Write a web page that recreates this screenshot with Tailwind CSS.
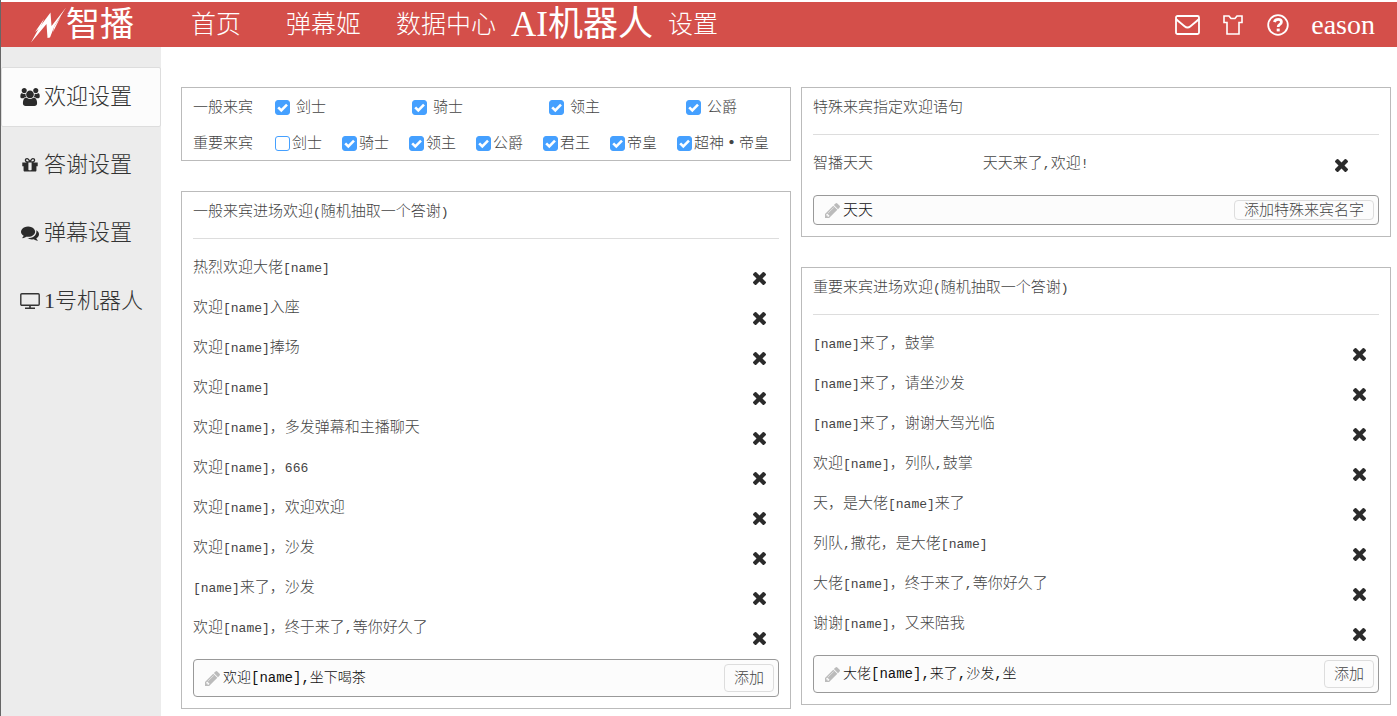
<!DOCTYPE html>
<html lang="zh-CN">
<head>
    <meta charset="UTF-8" />
    <meta name="viewport" content="width=device-width, initial-scale=1.0" />
    <title>智播 - AI机器人</title>
    <script src="https://cdn.jsdelivr.net/npm/@tailwindcss/browser@4"></script>
    <style>
        body { font-family: 'Liberation Serif', 'Noto Sans CJK SC', serif; }
        .latin { font-family: 'Liberation Mono', 'Noto Sans CJK SC', monospace; }
    </style>
</head>
<body class="min-h-screen flex flex-col bg-white border-l border-[#666] pt-[2px] text-[15px] leading-5 font-light text-[#444]">

<!-- Icon sprite -->
<svg class="hidden">
    <symbol id="i-times" viewBox="302 366 1188 1188"><path d="M1490 1322q0 40-28 68l-136 136q-28 28-68 28t-68-28l-294-294-294 294q-28 28-68 28t-68-28l-136-136q-28-28-28-68t28-68l294-294-294-294q-28-28-28-68t28-68l136-136q28-28 68-28t68 28l294 294 294-294q28-28 68-28t68 28l136 136q28 28 28 68t-28 68l-294 294 294 294q28 28 28 68z"/></symbol>
    <symbol id="i-pencil" viewBox="128 149 1515 1515"><path d="M491 1536l91-91-235-235-91 91v107h128v128h107zm523-928q0-22-22-22-10 0-17 7l-542 542q-7 7-7 17 0 22 22 22 10 0 17-7l542-542q7-7 7-17zm-54-192l416 416-832 832h-416v-416zm683 96q0 53-37 90l-166 166-416-416 166-165q36-38 90-38 53 0 91 38l235 234q37 39 37 91z"/></symbol>
    <symbol id="i-check" viewBox="0 0 15 15"><path d="M3.200 7.300l3.100 3.100 5.700-5.700" fill="none" stroke="currentColor" stroke-width="2.600"/></symbol>
</svg>

<!-- Header -->
<header class="h-[45px] shrink-0 bg-[#d44f4a] text-white flex items-center justify-between pl-[30px] pr-[22px]">
    <div class="flex items-center">
        <a href="#" class="flex items-center text-[34px] leading-[45px] font-normal">
            <svg class="w-[35px] h-[36px]" viewBox="0 0 35 36" fill="currentColor">
                <path d="M0 35.500L8 21 19.500 5.500 20.500 19 35 .5 23.500 19 19 30.500 16.500 31 15.500 17z"/>
                <path d="M4 25L13 12 9 21zM23 20L30 9 22 25z"/>
            </svg>
            智播
        </a>
        <nav class="flex items-center text-[25px] leading-[45px]">
            <a href="#" class="ml-[57px]">首页</a>
            <a href="#" class="ml-[45px]">弹幕姬</a>
            <a href="#" class="ml-[35px]">数据中心</a>
            <a href="#" class="ml-[15px] text-[35px] font-normal">AI机器人</a>
            <a href="#" class="ml-[15px]">设置</a>
        </nav>
    </div>
    <div class="flex items-center text-[28px] leading-[45px] font-normal">
        <button aria-label="消息">
            <svg class="w-[25px] h-[20px]" viewBox="0 0 25 20" fill="none" stroke="currentColor" stroke-width="1.800"><rect x="1" y="1" width="23" height="18" rx="1.500"/><path d="M1 4c3 3 6 5 8.500 7.200q3 2.600 6 0C18 9 21 7 24 4"/></svg>
        </button>
        <button aria-label="皮肤" class="ml-[23px]">
            <svg class="w-[20px] h-[20px]" viewBox="0 0 20 20" fill="none" stroke="currentColor" stroke-width="1.600"><path d="M1 1h5l2 2.500h4L14 1h5v6.500h-3V19H4V7.500H1z"/></svg>
        </button>
        <button aria-label="帮助" class="ml-[24px]">
            <svg class="w-[22px] h-[22px]" viewBox="0 0 22 22" fill="none" stroke="currentColor"><circle cx="11" cy="11" r="9.800" stroke-width="1.800"/><path d="M7.300 8q1-2.600 3.900-2.600 3.200 0 3.200 2.600 0 1.500-1.800 2.600-1.400.9-1.400 2.400" stroke-width="2.800"/><path d="M9.700 14.600h3v2.800h-3z" fill="currentColor" stroke="none"/></svg>
        </button>
        <a href="#" class="ml-[22px]">eason</a>
    </div>
</header>

<div class="flex-grow flex">
    <!-- Sidebar -->
    <aside class="w-40 shrink-0 bg-[#ececec] pt-5">
        <nav class="flex flex-col gap-2 text-[22px] text-[#333]">
            <a href="#" class="h-[60px] flex items-center gap-1 pl-[18px] rounded-[2px] border border-[#ddd] bg-[#fcfcfc]">
                <svg class="w-5 h-[18px]" viewBox="64 0 1920 1792" fill="#2b2b2b"><path d="M657 896q-162 5-265 128h-134q-82 0-138-40.500t-56-118.500q0-353 124-353 6 0 43.500 21t97.500 42.500 119 21.500q67 0 133-23-5 37-5 66 0 159 93 256zm1071 637q0 120-73 189.500t-194 69.500h-874q-121 0-194-69.500t-73-189.500q0-53 3.500-103.500t14-109 26.500-108.500 43-97.500 62-81 85.500-53.500 111.500-20q10 0 43 21.500t73 48 107 48 135 21.500 135-21.500 107-48 73-48 43-21.500q61 0 111.500 20t85.500 53.500 62 81 43 97.500 26.500 108.500 14 109 3.500 103.500zm-1024-1277q0 106-75 181t-181 75-181-75-75-181 75-181 181-75 181 75 75 181zm704 384q0 159-112.500 271.500t-271.500 112.500-271.500-112.500-112.500-271.500 112.500-271.500 271.500-112.500 271.500 112.500 112.500 271.500zm576 225q0 78-56 118.500t-138 40.500h-134q-103-123-265-128 93-97 93-256 0-29-5-66 66 23 133 23 59 0 119-21.500t97.500-42.500 43.500-21q124 0 124 353zm-128-609q0 106-75 181t-181 75-181-75-75-181 75-181 181-75 181 75 75 181z"/></svg>
                欢迎设置
            </a>
            <a href="#" class="h-[60px] flex items-center gap-1 pl-[19px]">
                <svg class="w-5 h-[18px]" viewBox="0 0 1792 1792" fill="#2b2b2b"><path d="M1056 1356v-716h-320v716q0 25 18 38.500t46 13.500h192q28 0 46-13.500t18-38.500zm-456-844h195l-126-161q-26-31-69-31-40 0-68 28t-28 68 28 68 68 28zm688-96q0-40-28-68t-68-28q-43 0-69 31l-125 161h194q40 0 68-28t28-68zm376 256v320q0 14-9 23t-23 9h-96v416q0 40-28 68t-68 28h-1088q-40 0-68-28t-28-68v-416h-96q-14 0-23-9t-9-23v-320q0-14 9-23t23-9h440q-93 0-158.500-65.500t-65.500-158.500 65.500-158.500 158.500-65.500q107 0 168 77l128 165 128-165q61-77 168-77 93 0 158.500 65.500t65.500 158.500-65.500 158.500-158.500 65.500h440q14 0 23 9t9 23z"/></svg>
                答谢设置
            </a>
            <a href="#" class="h-[60px] flex items-center gap-1 pl-[19px]">
                <svg class="w-5 h-[18px]" viewBox="0 0 1792 1792" fill="#2b2b2b"><path d="M1408 768q0 139-94 257t-256.500 186.500-353.500 68.500q-86 0-176-16-124 88-278 128-36 9-86 16h-3q-11 0-20.500-8t-11.500-21q-1-3-1-6.500t.5-6.500 2-6l2.500-5 3.500-5.500 4-5 4.500-5 4-4.500q5-6 23-25t26-29.500 22.500-29 25-38.500 20.500-44q-124-72-195-177t-71-224q0-139 94-257t256.500-186.500 353.500-68.500 353.500 68.500 256.500 186.500 94 257zm384 256q0 120-71 224.500t-195 176.500q10 24 20.500 44t25 38.500 22.500 29 26 29.500 23 25q1 1 4 4.500t4.500 5 4 5 3.500 5.500l2.500 5 2 6 .5 6.500-1 6.500q-3 14-13 22t-22 7q-50-7-86-16-154-40-278-128-90 16-176 16-271 0-472-132 58 4 88 4 161 0 309-45t264-129q125-92 192-212t67-254q0-77-23-152 129 71 204 178t75 230z"/></svg>
                弹幕设置
            </a>
            <a href="#" class="h-[60px] flex items-center gap-1 pl-[19px]">
                <svg class="w-5 h-[18px]" viewBox="0 0 20 18" fill="none" stroke="#333"><rect x=".8" y="1.700" width="18.400" height="11.600" rx="1" stroke-width="1.400"/><path d="M10 13v3M5 16.200h10" stroke-width="1.600"/></svg>
                1号机器人
            </a>
        </nav>
    </aside>

    <!-- Settings panels -->
    <main class="flex-grow grid grid-cols-[610fr_590fr] gap-[10px] items-start pt-10 pl-5 pr-[6px] pb-[7px]">
        <div class="flex flex-col gap-[30px]">
            <section class="border border-[#bbb] pt-[9px] pb-[7px] px-[11px] flex flex-col gap-4">
                <div class="flex">
                    <span class="w-[82px] shrink-0">一般来宾</span>
                    <div id="normal-guests" class="flex"></div>
                </div>
                <div class="flex">
                    <span class="w-[82px] shrink-0">重要来宾</span>
                    <div id="vip-guests" class="flex"></div>
                </div>
            </section>

            <section class="border border-[#bbb] px-[11px] pb-[11px]">
                <h2 class="pt-[9px] pb-[17px] border-b border-[#ddd]">一般来宾进场欢迎<span class="latin text-[13px] leading-none">(</span>随机抽取一个答谢<span class="latin text-[13px] leading-none">)</span></h2>
                <ul id="normal-list" class="mt-[18px]"></ul>
                <form class="mt-[2px] h-[38px] flex items-center rounded-[4px] border border-[#999] bg-[#fcfcfc] pl-[11px] pr-1">
                    <svg class="size-[15px] shrink-0 mr-[3px]" fill="#bbb"><use href="#i-pencil"/></svg>
                    <input type="text" aria-label="一般来宾欢迎语" value="欢迎[name],坐下喝茶" class="latin flex-grow min-w-0 text-[14px] text-[#111] outline-none" />
                    <button type="button" class="h-7 px-[9px] rounded-[4px] border border-[#ddd]">添加</button>
                </form>
            </section>
        </div>

        <div class="flex flex-col gap-[30px]">
            <section class="border border-[#bbb] px-[11px] pb-[11px]">
                <h2 class="pt-[9px] pb-[17px] border-b border-[#ddd]">特殊来宾指定欢迎语句</h2>
                <div class="mt-[18px] h-10 flex items-start">
                    <span class="w-[30%]">智播天天</span>
                    <span class="flex-grow">天天来了<span class="latin text-[13px] leading-none">,</span>欢迎<span class="latin text-[13px] leading-none">!</span></span>
                    <button aria-label="删除" class="mt-[6px] mr-[31px]"><svg class="size-[13px]" fill="#2b2b2b"><use href="#i-times"/></svg></button>
                </div>
                <form class="mt-[2px] h-[30px] flex items-center rounded-[4px] border border-[#999] bg-[#fcfcfc] pl-[11px] pr-1">
                    <svg class="size-[15px] shrink-0 mr-[3px]" fill="#bbb"><use href="#i-pencil"/></svg>
                    <input type="text" aria-label="特殊来宾名字" value="天天" class="flex-grow min-w-0 text-[#111] outline-none" />
                    <button type="button" class="h-5 leading-[18px] px-[9px] rounded-[4px] border border-[#ddd]">添加特殊来宾名字</button>
                </form>
            </section>

            <section class="border border-[#bbb] px-[11px] pb-[11px]">
                <h2 class="pt-[9px] pb-[17px] border-b border-[#ddd]">重要来宾进场欢迎<span class="latin text-[13px] leading-none">(</span>随机抽取一个答谢<span class="latin text-[13px] leading-none">)</span></h2>
                <ul id="vip-list" class="mt-[18px]"></ul>
                <form class="mt-[2px] h-[38px] flex items-center rounded-[4px] border border-[#999] bg-[#fcfcfc] pl-[11px] pr-1">
                    <svg class="size-[15px] shrink-0 mr-[3px]" fill="#bbb"><use href="#i-pencil"/></svg>
                    <input type="text" aria-label="重要来宾欢迎语" value="大佬[name],来了,沙发,坐" class="latin flex-grow min-w-0 text-[14px] text-[#111] outline-none" />
                    <button type="button" class="h-7 px-[9px] rounded-[4px] border border-[#ddd]">添加</button>
                </form>
            </section>
        </div>
    </main>
</div>

<!-- Script -->
<script>
    const normalList = ["热烈欢迎大佬[name]", "欢迎[name]入座", "欢迎[name]捧场", "欢迎[name]", "欢迎[name]，多发弹幕和主播聊天", "欢迎[name]，666", "欢迎[name]，欢迎欢迎", "欢迎[name]，沙发", "[name]来了，沙发", "欢迎[name]，终于来了,等你好久了"];
    const vipList = ["[name]来了，鼓掌", "[name]来了，请坐沙发", "[name]来了，谢谢大驾光临", "欢迎[name]，列队,鼓掌", "天，是大佬[name]来了", "列队,撒花，是大佬[name]", "大佬[name]，终于来了,等你好久了", "谢谢[name]，又来陪我"];

    // latin text is set a little smaller than the chinese text
    function renderList(id, items) {
        document.getElementById(id).innerHTML = items.map(text => `
            <li class="h-10 flex items-start justify-between">
                <span>${text.replace(/[\x21-\x7e]+/g, '<span class="latin text-[13px] leading-none">$&</span>')}</span>
                <button aria-label="删除" class="mt-[15px] mr-[13px]"><svg class="size-[13px]" fill="#2b2b2b"><use href="#i-times"/></svg></button>
            </li>`).join("");
    }

    function renderChecks(id, names, itemClass, unchecked) {
        document.getElementById(id).innerHTML = names.map(name => `
            <label class="flex items-center whitespace-nowrap ${itemClass}">
                <span class="grid size-[15px] shrink-0">
                    <input type="checkbox" ${name === unchecked ? "" : "checked"} class="peer appearance-none col-start-1 row-start-1 size-[15px] rounded-[3px] border border-[#45a0ff] bg-white checked:bg-[#45a0ff]" />
                    <svg class="col-start-1 row-start-1 size-[15px] text-white pointer-events-none invisible peer-checked:visible"><use href="#i-check"/></svg>
                </span>
                <span>${name.replace("・", '<b class="font-black">・</b>')}</span>
            </label>`).join("");
    }

    renderChecks("normal-guests", ["剑士", "骑士", "领主", "公爵"], "w-[137px] gap-[6px] last:w-auto", "");
    renderChecks("vip-guests", ["剑士", "骑士", "领主", "公爵", "君王", "帝皇", "超神・帝皇"], "w-[67px] gap-[2px] last:w-auto", "剑士");
    renderList("normal-list", normalList);
    renderList("vip-list", vipList);
</script>
</body>
</html>
